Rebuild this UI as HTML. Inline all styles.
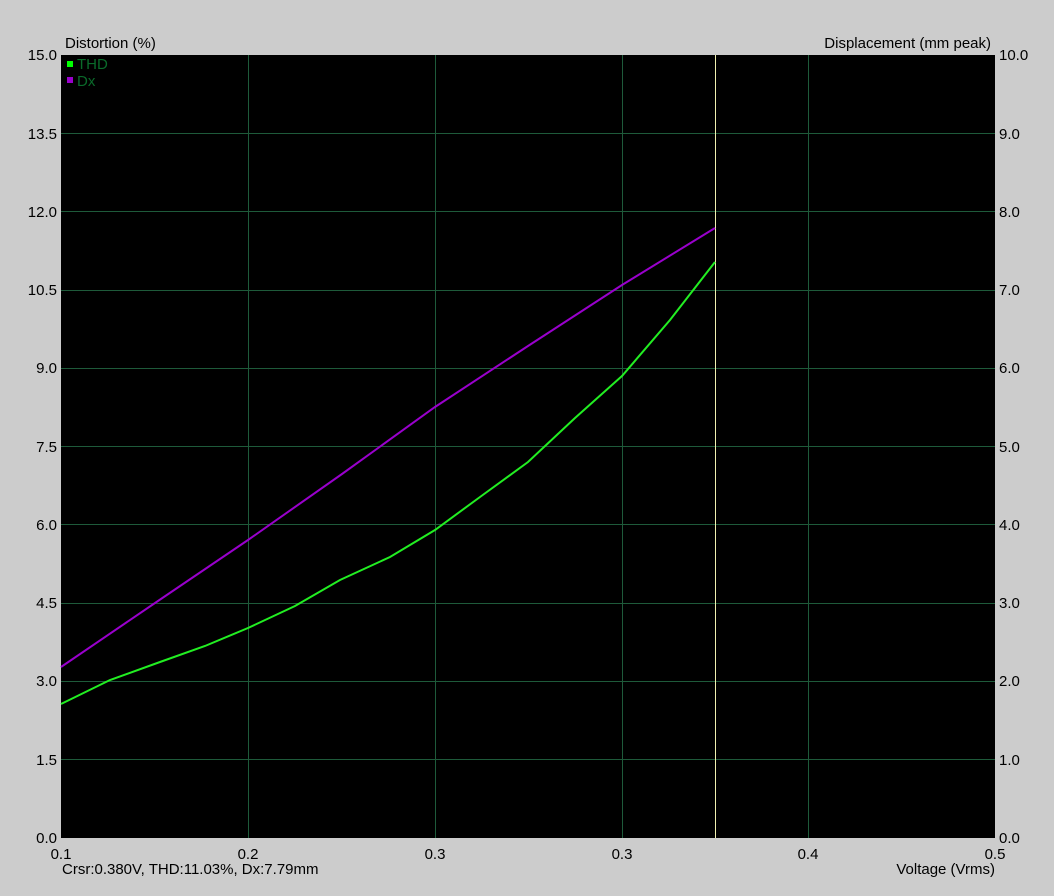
<!DOCTYPE html>
<html><head><style>
body{margin:0;background:#cccccc;width:1054px;height:896px;overflow:hidden;font-family:"Liberation Sans",sans-serif;}
svg{display:block}
text{font-family:"Liberation Sans",sans-serif;font-size:15px;fill:#000}
</style></head><body>
<svg width="1054" height="896" viewBox="0 0 1054 896">
<rect x="0" y="0" width="1054" height="896" fill="#cccccc"/>
<rect x="61" y="55" width="934" height="783" fill="#000"/>
<g stroke="#1e5a3a" stroke-width="1">
<line x1="61" y1="133.5" x2="995" y2="133.5"/>
<line x1="61" y1="211.5" x2="995" y2="211.5"/>
<line x1="61" y1="290.5" x2="995" y2="290.5"/>
<line x1="61" y1="368.5" x2="995" y2="368.5"/>
<line x1="61" y1="446.5" x2="995" y2="446.5"/>
<line x1="61" y1="524.5" x2="995" y2="524.5"/>
<line x1="61" y1="603.5" x2="995" y2="603.5"/>
<line x1="61" y1="681.5" x2="995" y2="681.5"/>
<line x1="61" y1="759.5" x2="995" y2="759.5"/>
<line x1="248.5" y1="55" x2="248.5" y2="838"/>
<line x1="435.5" y1="55" x2="435.5" y2="838"/>
<line x1="622.5" y1="55" x2="622.5" y2="838"/>
<line x1="808.5" y1="55" x2="808.5" y2="838"/>
</g>
<line x1="715.5" y1="55" x2="715.5" y2="838" stroke="#f0f0b0" stroke-width="1"/>
<polyline fill="none" stroke="#9900cc" stroke-width="2" points="61,667 155,603 248,540 342,474 435,407 528,346 622,285 715,228"/>
<polyline fill="none" stroke="#22ee22" stroke-width="2" points="61,704 110,680 160,662 205,646 248,628 295,606 340,580 390,557 435,530 480,497 528,462 575,418 622,376 670,320 715,262"/>
<rect x="67" y="61" width="6" height="6" fill="#00ff00"/>
<rect x="67" y="77" width="6" height="6" fill="#9900cc"/>
<text x="77" y="69" style="fill:#0a6a2a">THD</text>
<text x="77" y="86" style="fill:#0a6a2a">Dx</text>
<text x="65" y="48">Distortion (%)</text>
<text x="991" y="48" text-anchor="end">Displacement (mm peak)</text>
<g text-anchor="end">
<text x="57" y="60">15.0</text><text x="57" y="139">13.5</text><text x="57" y="217">12.0</text><text x="57" y="295">10.5</text><text x="57" y="373">9.0</text><text x="57" y="452">7.5</text><text x="57" y="530">6.0</text><text x="57" y="608">4.5</text><text x="57" y="686">3.0</text><text x="57" y="765">1.5</text><text x="57" y="843">0.0</text>
</g>
<g>
<text x="999" y="60">10.0</text><text x="999" y="139">9.0</text><text x="999" y="217">8.0</text><text x="999" y="295">7.0</text><text x="999" y="373">6.0</text><text x="999" y="452">5.0</text><text x="999" y="530">4.0</text><text x="999" y="608">3.0</text><text x="999" y="686">2.0</text><text x="999" y="765">1.0</text><text x="999" y="843">0.0</text>
</g>
<g text-anchor="middle">
<text x="61" y="859">0.1</text><text x="248" y="859">0.2</text><text x="435" y="859">0.3</text><text x="622" y="859">0.3</text><text x="808" y="859">0.4</text><text x="995" y="859">0.5</text>
</g>
<text x="62" y="874">Crsr:0.380V, THD:11.03%, Dx:7.79mm</text>
<text x="995" y="874" text-anchor="end">Voltage (Vrms)</text>
</svg>
</body></html>
